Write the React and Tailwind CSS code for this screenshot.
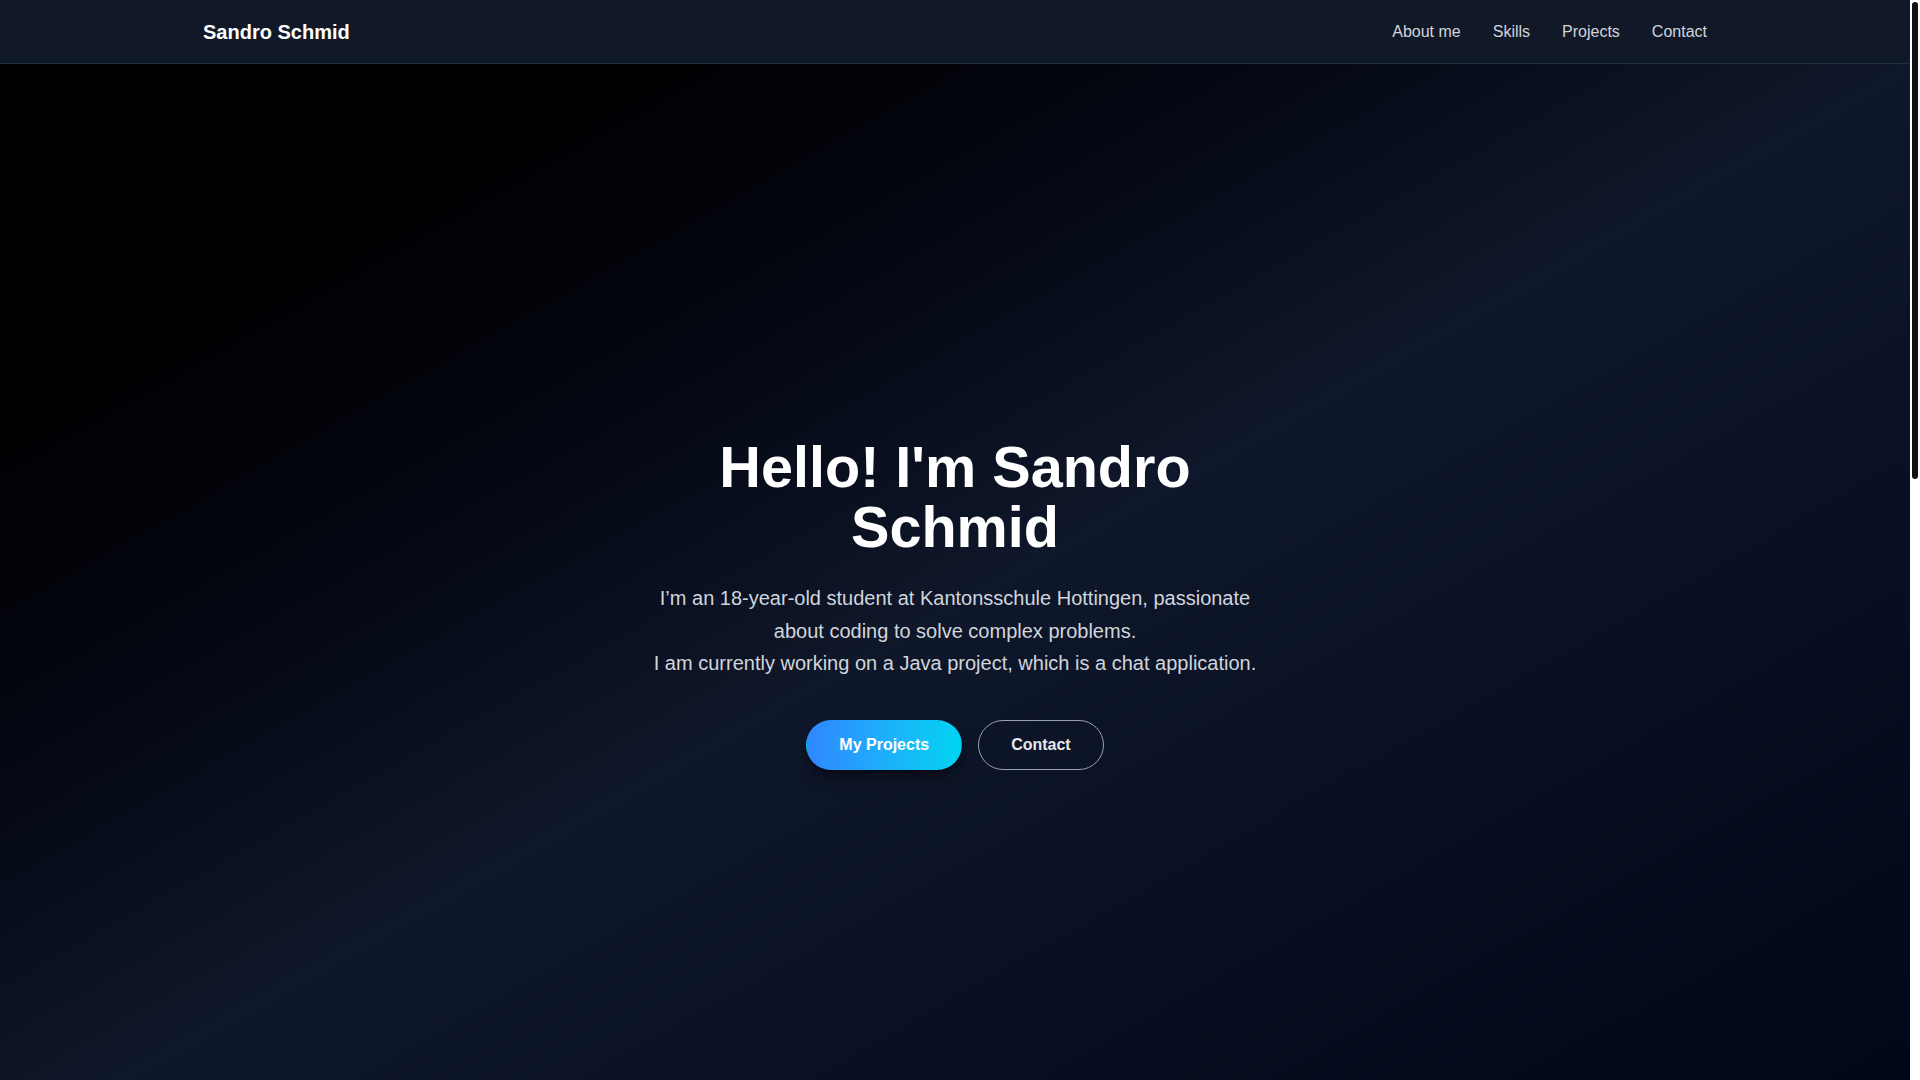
import React from 'react';

const links = ['About me', 'Skills', 'Projects', 'Contact'];

const skills = ['Java', 'JavaScript', 'HTML & CSS', 'Git'];

const projects = [
  { title: 'Chat Application', text: 'A Java client/server chat with rooms and private messages.' },
  { title: 'Portfolio', text: 'This website, built with React and Tailwind CSS.' },
  { title: 'School Projects', text: 'Smaller programs written at Kantonsschule Hottingen.' },
];

const App = () => {
  return (
    <div className="h-screen overflow-hidden flex bg-[#020617] text-white font-['Liberation_Sans',Arial,sans-serif]">
      <div className="flex-1 min-w-0 h-full overflow-y-auto [scrollbar-width:none]">
        {/* Navbar */}
        <nav className="h-16 bg-[#111827] border-b border-[#1e2f40]">
          <div className="container mx-auto px-4 h-full flex items-center justify-between">
            <a href="#" className="text-xl font-bold text-white">Sandro Schmid</a>
            <ul className="flex items-center gap-8">
              {links.map((link) => (
                <li key={link}>
                  <a href="#" className="text-base text-gray-300 hover:text-white">{link}</a>
                </li>
              ))}
            </ul>
          </div>
        </nav>

        {/* Hero */}
        <section className="h-screen flex items-center justify-center bg-linear-to-br from-black via-[#0f172a] to-[#020617]">
          <div className="max-w-[640px] text-center">
            <h1 className="text-[3.6rem] leading-[1.04] font-bold text-white mb-6">Hello! I'm Sandro Schmid</h1>
            <p className="text-xl leading-relaxed text-gray-300 mb-10">
              I’m an 18-year-old student at Kantonsschule Hottingen, passionate about coding to solve complex problems.
              <br />
              I am currently working on a Java project, which is a chat application.
            </p>
            <div className="flex justify-center gap-4">
              <a href="#" className="px-8 py-3 rounded-full border border-transparent bg-linear-to-r from-[#2f86ff] to-[#00d4f2] text-white font-bold shadow-lg shadow-black/40">
                My Projects
              </a>
              <a href="#" className="px-8 py-3 rounded-full border border-gray-400 text-gray-200 font-bold">
                Contact
              </a>
            </div>
          </div>
        </section>

        {/* About */}
        <section className="py-20 bg-[#0b1120]">
          <div className="container mx-auto px-4">
            <h2 className="text-4xl font-bold mb-8">About me</h2>
            <p className="text-lg text-gray-300 max-w-3xl leading-7">
              I live in Zurich and go to Kantonsschule Hottingen. In my free time I like to write code, learn new
              languages and build small tools that make everyday things a bit easier.
            </p>
          </div>
        </section>

        {/* Skills */}
        <section className="py-20 bg-[#111827]">
          <div className="container mx-auto px-4">
            <h2 className="text-4xl font-bold mb-8">Skills</h2>
            <div className="grid grid-cols-4 gap-6">
              {skills.map((s) => (
                <div key={s} className="h-[120px] rounded-xl bg-[#1f2937] flex items-center justify-center text-lg font-bold">{s}</div>
              ))}
            </div>
          </div>
        </section>

        {/* Projects */}
        <section className="py-20 bg-[#0b1120]">
          <div className="container mx-auto px-4">
            <h2 className="text-4xl font-bold mb-8">Projects</h2>
            <div className="grid grid-cols-3 gap-6">
              {projects.map((p) => (
                <div key={p.title} className="h-[200px] rounded-xl bg-[#1f2937] p-6">
                  <h3 className="text-xl font-bold mb-2">{p.title}</h3>
                  <p className="text-gray-300">{p.text}</p>
                </div>
              ))}
            </div>
          </div>
        </section>

        {/* Contact */}
        <section className="py-12 bg-[#111827]">
          <div className="container mx-auto px-4 text-center">
            <h2 className="text-3xl font-bold mb-4">Contact</h2>
            <p className="text-gray-300">sandro.schmid@example.com</p>
          </div>
        </section>
      </div>

      {/* page scrollbar */}
      <div className="w-[10px] shrink-0 bg-white px-[2px] pt-[2px]">
        <div className="h-[477px] rounded-full bg-[#111111]" />
      </div>
    </div>
  );
};

export default App;
